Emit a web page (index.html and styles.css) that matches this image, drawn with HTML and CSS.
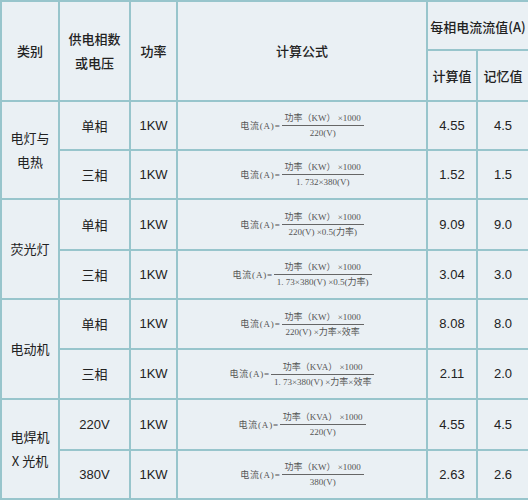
FILE: index.html
```html
<!DOCTYPE html>
<html lang="zh">
<head>
<meta charset="utf-8">
<link rel="stylesheet" href="styles.css">
</head>
<body>
<table class="tbl">
  <colgroup>
    <col class="c1"><col class="c2"><col class="c3"><col class="c4"><col class="c5"><col class="c6">
  </colgroup>
  <tr class="h1">
    <th rowspan="2">类别</th>
    <th rowspan="2">供电相数<br>或电压</th>
    <th rowspan="2">功率</th>
    <th rowspan="2">计算公式</th>
    <th colspan="2" class="top">每相电流流值(A)</th>
  </tr>
  <tr class="h2">
    <th>计算值</th>
    <th>记忆值</th>
  </tr>
  <tr class="r r1">
    <td rowspan="2" class="cat">电灯与<br>电热</td>
    <td class="cn">单相</td>
    <td class="num">1KW</td>
    <td><span class="f"><span class="lbl">电流(A)=</span><span class="frac"><span class="nu">功率（KW） ×1000</span><span class="de">220(V)</span></span></span></td>
    <td class="num">4.55</td>
    <td class="num">4.5</td>
  </tr>
  <tr class="r r2">
    <td class="cn">三相</td>
    <td class="num">1KW</td>
    <td><span class="f"><span class="lbl">电流(A)=</span><span class="frac"><span class="nu">功率（KW） ×1000</span><span class="de">1. 732×380(V)</span></span></span></td>
    <td class="num">1.52</td>
    <td class="num">1.5</td>
  </tr>
  <tr class="r r3">
    <td rowspan="2" class="cat">荧光灯</td>
    <td class="cn">单相</td>
    <td class="num">1KW</td>
    <td><span class="f"><span class="lbl">电流(A)=</span><span class="frac"><span class="nu">功率（KW） ×1000</span><span class="de">220(V) ×0.5(力率)</span></span></span></td>
    <td class="num">9.09</td>
    <td class="num">9.0</td>
  </tr>
  <tr class="r r4">
    <td class="cn">三相</td>
    <td class="num">1KW</td>
    <td><span class="f"><span class="lbl">电流(A)=</span><span class="frac"><span class="nu">功率（KW） ×1000</span><span class="de">1. 73×380(V) ×0.5(力率)</span></span></span></td>
    <td class="num">3.04</td>
    <td class="num">3.0</td>
  </tr>
  <tr class="r r5">
    <td rowspan="2" class="cat">电动机</td>
    <td class="cn">单相</td>
    <td class="num">1KW</td>
    <td><span class="f"><span class="lbl">电流(A)=</span><span class="frac"><span class="nu">功率（KW） ×1000</span><span class="de">220(V) ×力率×效率</span></span></span></td>
    <td class="num">8.08</td>
    <td class="num">8.0</td>
  </tr>
  <tr class="r r6">
    <td class="cn">三相</td>
    <td class="num">1KW</td>
    <td><span class="f"><span class="lbl">电流(A)=</span><span class="frac"><span class="nu">功率（KVA） ×1000</span><span class="de">1. 73×380(V) ×力率×效率</span></span></span></td>
    <td class="num">2.11</td>
    <td class="num">2.0</td>
  </tr>
  <tr class="r r7">
    <td rowspan="2" class="cat">电焊机<br>X 光机</td>
    <td class="num">220V</td>
    <td class="num">1KW</td>
    <td><span class="f"><span class="lbl">电流(A)=</span><span class="frac"><span class="nu">功率（KVA） ×1000</span><span class="de">220(V)</span></span></span></td>
    <td class="num">4.55</td>
    <td class="num">4.5</td>
  </tr>
  <tr class="r r8">
    <td class="num">380V</td>
    <td class="num">1KW</td>
    <td><span class="f"><span class="lbl">电流(A)=</span><span class="frac"><span class="nu">功率（KW） ×1000</span><span class="de">380(V)</span></span></span></td>
    <td class="num">2.63</td>
    <td class="num">2.6</td>
  </tr>
</table>
</body>
</html>
```
FILE: styles.css
```css
html, body {
  margin: 0;
  padding: 0;
  background: #eaf0f4;
}
.tbl {
  border-collapse: collapse;
  table-layout: fixed;
  width: 528px;
  background: #eaf0f4;
  font-family: "Noto Sans CJK SC", "Liberation Sans", sans-serif;
  color: #222;
}
.c1 { width: 58px; }
.c2 { width: 71px; }
.c3 { width: 47px; }
.c4 { width: 250px; }
.c5 { width: 50px; }
.c6 { width: 52px; }
.tbl th, .tbl td {
  border: 2px solid #98c5cc;
  padding: 0;
  text-align: center;
  vertical-align: middle;
  font-size: 13px;
  line-height: 24px;
  font-weight: normal;
}
.tbl th {
  font-weight: 500;
}
.tbl th.top {
  padding-top: 3px;
}
.h1 { height: 49px; }
.h2 { height: 51px; }
.r1 { height: 49px; }
.r2 { height: 49px; }
.r3 { height: 51px; }
.r4 { height: 49px; }
.r5 { height: 50px; }
.r6 { height: 50px; }
.r7 { height: 51px; }
.r8 { height: 49px; }
.cat, .cn {
  font-weight: 500;
}
.num {
  font-family: "Liberation Sans", Arial, sans-serif;
  color: #222;
}
.f {
  display: inline-flex;
  align-items: center;
  font-family: "Liberation Serif", "Noto Sans CJK SC", serif;
  font-size: 9px;
  line-height: 12px;
  color: #555;
}
.lbl {
  padding-right: 1px;
  letter-spacing: 0.8px;
}
.frac {
  display: inline-flex;
  flex-direction: column;
  align-items: stretch;
}
.nu {
  padding: 0 3px 1px;
  border-bottom: 1px solid #666;
  white-space: nowrap;
}
.de {
  padding: 1px 3px 0;
  white-space: nowrap;
}
```
